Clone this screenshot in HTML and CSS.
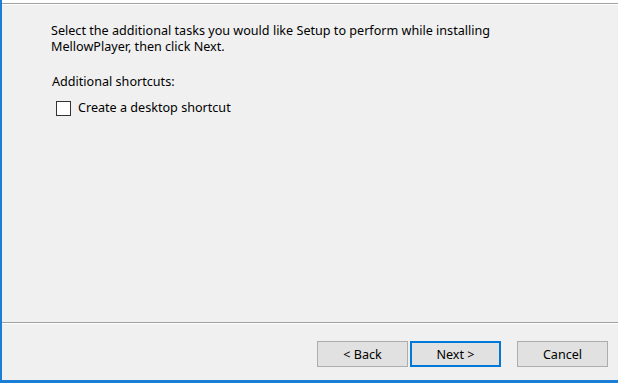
FILE: index.html
```html
<!DOCTYPE html>
<html>
<head>
<meta charset="utf-8">
<link rel="stylesheet" href="styles.css">
</head>
<body>
<div class="window">
  <div class="top"></div>
  <div class="etch"></div>
  <div class="content">
    <p class="intro">Select the additional tasks you would like Setup to perform while installing<br>MellowPlayer, then click Next.</p>
    <p class="group">Additional shortcuts:</p>
    <label class="check"><span class="box"></span><span class="check-label">Create a desktop shortcut</span></label>
  </div>
  <div class="etch"></div>
  <div class="footer">
    <button class="btn">&lt; Back</button>
    <button class="btn btn-default">Next &gt;</button>
    <button class="btn btn-cancel">Cancel</button>
  </div>
</div>
</body>
</html>
```
FILE: styles.css
```css
html, body {
  margin: 0;
  padding: 0;
  background: #f0f0f0;
}
.window {
  width: 618px;
  height: 383px;
  box-sizing: border-box;
  border-left: 2px solid #1a7fd4;
  border-bottom: 3px solid #1a7fd4;
  background: #f0f0f0;
  display: flex;
  flex-direction: column;
  font-family: "Noto Sans", "Open Sans", sans-serif;
  font-size: 12.6px;
  color: #000;
}
.top {
  height: 3px;
  background: #fff;
}
.etch {
  height: 0;
  border-top: 1px solid #a0a0a0;
  border-bottom: 1px solid #fff;
}
.content {
  flex: 1;
  padding: 18px 0 0 49px;
}
.intro {
  margin: 0;
  line-height: 16px;
}
.group {
  margin: 19px 0 0 1px;
  line-height: 16px;
}
.check {
  display: flex;
  align-items: center;
  margin: 10px 0 0 5px;
}
.box {
  width: 13px;
  height: 13px;
  border: 1px solid #333;
  background: #fff;
}
.check-label {
  margin-left: 7px;
  line-height: 16px;
}
.footer {
  height: 56px;
  display: flex;
  align-items: flex-start;
  justify-content: flex-end;
  padding: 17px 10px 0 0;
  box-sizing: border-box;
}
.btn {
  width: 91px;
  height: 26px;
  box-sizing: border-box;
  border: 1px solid #adadad;
  background: #e1e1e1;
  font-family: inherit;
  font-size: 12.6px;
  color: #000;
  padding: 0;
  margin: 0;
}
.btn-default {
  border: 2px solid #0078d7;
  margin-left: 2px;
}
.btn-cancel {
  margin-left: 16px;
}
```
